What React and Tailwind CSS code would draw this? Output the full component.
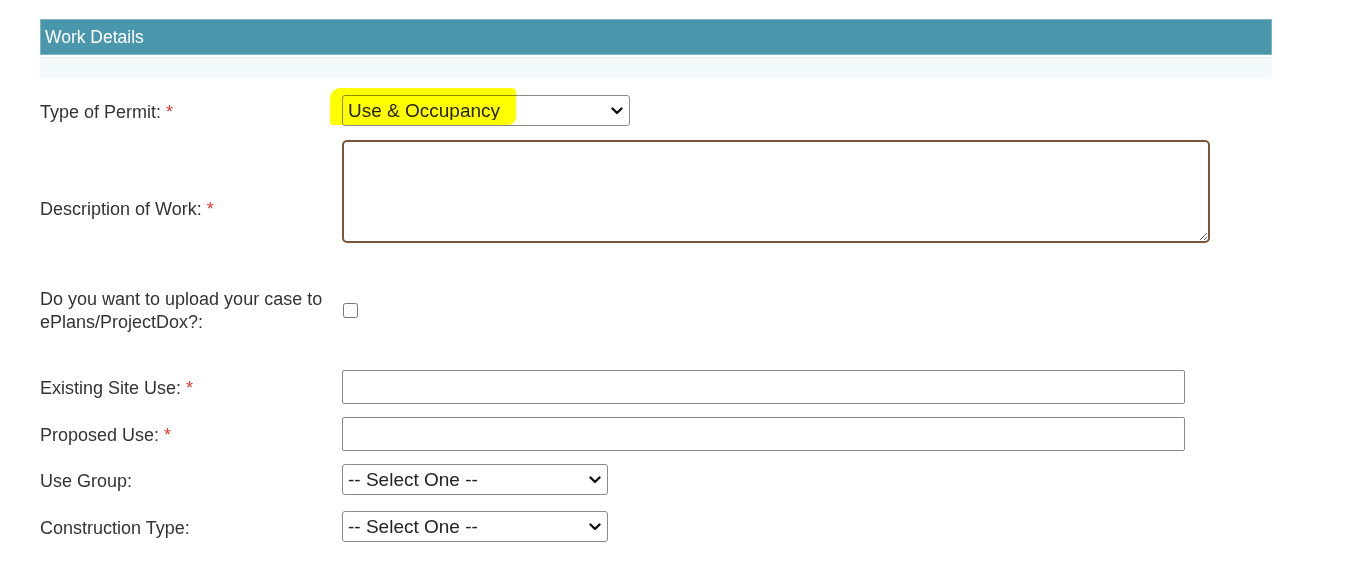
const font = { fontFamily: '"Liberation Sans", Arial, sans-serif' };

const Req = () => <span className="ml-[5px] text-[#e53935]">*</span>;

const Chevron = () => (
  <svg
    className="pointer-events-none absolute right-[7px] top-1/2 -translate-y-1/2"
    width="12"
    height="8"
    viewBox="0 0 12 8"
  >
    <path d="M1.5 1.5 L6 6 L10.5 1.5" fill="none" stroke="#111" strokeWidth="2.4" strokeLinecap="round" strokeLinejoin="round" />
  </svg>
);

const Select = ({ width, value, options, height = "h-[31px]" }) => (
  <div className={`relative ${width}`}>
    <select
      defaultValue={value}
      className={`${height} w-full appearance-none rounded-[3px] border border-[#8a8a8a] bg-white pl-[5px] pr-6 text-[19px] leading-none text-[#222] outline-none`}
      style={font}
    >
      {options.map((o) => (
        <option key={o}>{o}</option>
      ))}
    </select>
    <Chevron />
  </div>
);

const Label = ({ children, className = "pt-[3px]" }) => (
  <div className={`w-[302px] shrink-0 text-[18px] leading-[23px] text-[#333] ${className}`}>{children}</div>
);

export default function App() {
  return (
    <div className="min-h-[561px] bg-white pt-[19px]" style={font}>
      <div className="ml-[40px] w-[1232px]">
        <div className="flex h-[36px] items-center border border-[#7fb6c6] bg-[#4a96ad] pl-[4px] text-[17.5px] text-white">
          Work Details
        </div>
        <div className="mt-[2px] h-[22px] border-t border-[#e8eeee] bg-gradient-to-b from-[#f1f8fa] to-[#f5fbfd]" />

        {/* type of permit */}
        <div className="mt-[16px] flex items-center">
          <Label>
            Type of Permit:<Req />
          </Label>
          <div className="relative">
            <Select width="w-[288px]" height="h-[31px]" value="Use & Occupancy" options={["Use & Occupancy", "Building", "Demolition"]} />
            <div className="pointer-events-none absolute left-[-12px] top-[-7px] h-[37px] w-[186px] rounded-[10px_4px_8px_3px] bg-[#ffff00] mix-blend-multiply" />
          </div>
        </div>

        {/* description */}
        <div className="mt-[14px] flex">
          <Label className="pt-[58px]">
            Description of Work:<Req />
          </Label>
          <textarea className="h-[103px] w-[868px] rounded-[5px] border-2 border-[#7a5636] bg-white outline-none" />
        </div>

        {/* upload */}
        <div className="mt-[45px] flex items-center">
          <Label className="pt-0">
            Do you want to upload your case to
            <br />
            ePlans/ProjectDox?:
          </Label>
          <input type="checkbox" className="ml-[1px] mt-[-2px] h-[15px] w-[15px] accent-[#666]" />
        </div>

        {/* existing site use */}
        <div className="mt-[36px] flex items-center">
          <Label>
            Existing Site Use:<Req />
          </Label>
          <input className="h-[34px] w-[843px] rounded-[2px] border border-[#8a8a8a] bg-white outline-none" />
        </div>

        <div className="mt-[13px] flex items-center">
          <Label>
            Proposed Use:<Req />
          </Label>
          <input className="h-[34px] w-[843px] rounded-[2px] border border-[#8a8a8a] bg-white outline-none" />
        </div>

        <div className="mt-[13px] flex items-center">
          <Label>Use Group:</Label>
          <Select width="w-[266px]" value="-- Select One --" options={["-- Select One --", "A-1", "B", "M"]} />
        </div>

        <div className="mt-[16px] flex items-center">
          <Label>Construction Type:</Label>
          <Select width="w-[266px]" value="-- Select One --" options={["-- Select One --", "I-A", "II-B", "V-B"]} />
        </div>
      </div>
    </div>
  );
}
